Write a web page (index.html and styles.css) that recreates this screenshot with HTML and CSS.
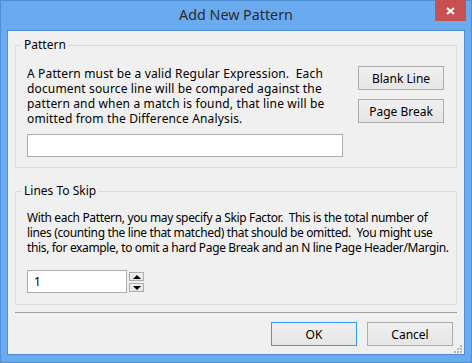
FILE: index.html
```html
<!DOCTYPE html>
<html lang="en">
<head>
    <meta charset="UTF-8">
    <title>Add New Pattern</title>
    <link rel="stylesheet" href="styles.css">
</head>
<body>
    <div class="window">
        <div class="titlebar">
            <span></span>
            <div class="title">Add New Pattern</div>
            <button class="close">
                <svg width="9" height="8" viewBox="0 0 9 8"><path d="M1 1 L8 7 M8 1 L1 7" stroke="#fff" stroke-width="2"/></svg>
            </button>
        </div>
        <div class="client">
            <fieldset class="group pattern-group">
                <legend>Pattern</legend>
                <div class="pattern-row">
                    <p class="desc">A Pattern must be a valid Regular Expression.&nbsp; Each<br>document source line will be compared against the<br>pattern and when a match is found, that line will be<br>omitted from the Difference Analysis.</p>
                    <div class="side-buttons">
                        <button class="btn">Blank Line</button>
                        <button class="btn">Page Break</button>
                    </div>
                </div>
                <input type="text" class="text-input pattern-input">
            </fieldset>

            <fieldset class="group skip-group">
                <legend>Lines To Skip</legend>
                <p class="desc">With each Pattern, you may specify a Skip Factor.&nbsp; This is the total number of<br>lines (counting the line that matched) that should be omitted.&nbsp; You might use<br>this, for example, to omit a hard Page Break and an N line Page Header/Margin.</p>
                <div class="spin">
                    <input type="text" class="text-input spin-input" value="1">
                    <div class="spin-buttons">
                        <button class="spin-btn"><span class="tri-up"></span></button>
                        <button class="spin-btn"><span class="tri-down"></span></button>
                    </div>
                </div>
            </fieldset>

            <div class="separator"></div>

            <div class="footer">
                <button class="btn btn-default">OK</button>
                <button class="btn">Cancel</button>
            </div>

            <svg class="grip" width="9" height="9" viewBox="0 0 9 9">
                <rect x="6" y="0" width="2" height="2" fill="#b4b4b4"/>
                <rect x="3" y="3" width="2" height="2" fill="#b4b4b4"/>
                <rect x="6" y="3" width="2" height="2" fill="#b4b4b4"/>
                <rect x="0" y="6" width="2" height="2" fill="#b4b4b4"/>
                <rect x="3" y="6" width="2" height="2" fill="#b4b4b4"/>
                <rect x="6" y="6" width="2" height="2" fill="#b4b4b4"/>
            </svg>
        </div>
    </div>
</body>
</html>
```

FILE: styles.css
```css
* {
    box-sizing: border-box;
}

body {
    margin: 0;
    font-family: "Noto Sans", sans-serif;
    font-size: 12px;
    color: #000;
}

.window {
    width: 472px;
    height: 363px;
    background: #6aabf0;
    border: 1px solid #4f8fd6;
    display: flex;
    flex-direction: column;
}

.titlebar {
    flex: none;
    height: 29px;
    display: grid;
    grid-template-columns: 1fr auto 1fr;
    align-items: start;
}

.title {
    font-size: 14.3px;
    line-height: 20px;
    padding-top: 4px;
    color: #2b2b2b;
}

.close {
    justify-self: end;
    margin: -1px 5px 0 0;
    width: 31px;
    height: 21px;
    padding: 0;
    border: none;
    background: #c75050;
    display: flex;
    align-items: center;
    justify-content: center;
}

.client {
    flex: 1;
    min-height: 0;
    overflow: hidden;
    margin: 0 6px 7px;
    border: 1px solid #4d8ccf;
    background: #f0f0f0;
    position: relative;
}

.group {
    margin: 6px 7px 0;
    border: 1px solid #dcdcdc;
    padding: 13px 12px 10px 11px;
    min-width: 0;
}

.group legend {
    margin-left: -5px;
    padding: 0 2px;
    line-height: 16px;
}

.desc {
    margin: 0;
    line-height: 15px;
    white-space: nowrap;
}

.pattern-group .desc {
    letter-spacing: 0.15px;
}

.skip-group .desc {
    letter-spacing: -0.35px;
}

.pattern-row {
    display: flex;
    justify-content: space-between;
    align-items: flex-start;
}

.side-buttons {
    display: flex;
    flex-direction: column;
    gap: 9px;
}

.btn {
    width: 86px;
    height: 24px;
    padding: 0;
    font-family: "Noto Sans", sans-serif;
    font-size: 12px;
    color: #000;
    border: 1px solid #acacac;
    background: linear-gradient(#f0f0f0, #e5e5e5);
}

.btn-default {
    border-color: #3399ff;
}

.text-input {
    display: block;
    height: 23px;
    border: 1px solid #abadb3;
    background: #fff;
    font-family: "Noto Sans", sans-serif;
    font-size: 12px;
    padding: 0 6px;
    outline: none;
}

.pattern-input {
    width: 316px;
    margin-top: 8px;
}

.skip-group {
    margin-top: 15px;
    padding: 11px 12px 11px 11px;
}

.spin {
    display: flex;
    gap: 2px;
    margin-top: 15px;
}

.spin-input {
    width: 100px;
}

.spin-buttons {
    display: flex;
    flex-direction: column;
    gap: 2px;
    margin-top: 2px;
}

.spin-btn {
    width: 15px;
    height: 9px;
    padding: 0;
    border: 1px solid #acacac;
    background: linear-gradient(#f0f0f0, #e5e5e5);
    display: flex;
    align-items: center;
    justify-content: center;
}

.tri-up {
    border-left: 4px solid transparent;
    border-right: 4px solid transparent;
    border-bottom: 4px solid #000;
}

.tri-down {
    border-left: 4px solid transparent;
    border-right: 4px solid transparent;
    border-top: 4px solid #000;
}

.separator {
    margin: 7px 7px 0;
    height: 1px;
    background: #a0a0a0;
}

.footer {
    display: flex;
    justify-content: flex-end;
    gap: 10px;
    margin-top: 9px;
    padding-right: 11px;
}

.grip {
    position: absolute;
    right: 1px;
    bottom: 0;
}
```
